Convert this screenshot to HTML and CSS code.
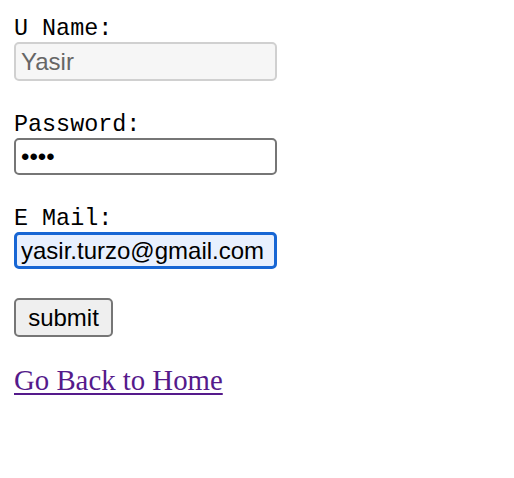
FILE: index.html
```html
<!DOCTYPE html>
<html>
<head>
<meta charset="utf-8">
<link rel="stylesheet" href="styles.css">
</head>
<body>
<form class="form">
  <label class="label" for="uname">U Name:</label>
  <input class="field field-readonly" id="uname" type="text" value="Yasir" readonly>
  <label class="label label-gap" for="pass">Password:</label>
  <input class="field field-plain" id="pass" type="password" value="abcd">
  <label class="label label-gap" for="mail">E Mail:</label>
  <input class="field field-focus" id="mail" type="text" value="yasir.turzo@gmail.com">
  <button class="submit" type="button">submit</button>
</form>
<a class="home" href="#">Go Back to Home</a>
</body>
</html>
```
FILE: styles.css
```css
html, body {
  background: #ffffff;
}
body {
  margin: 16px 14px 0 14px;
}
.form {
  display: flex;
  flex-direction: column;
  align-items: flex-start;
}
.label {
  display: block;
  font-family: "Liberation Mono", monospace;
  font-size: 23.4px;
  line-height: 26px;
  color: #000;
}
.label-gap {
  margin-top: 31px;
}
.field {
  box-sizing: border-box;
  width: 263px;
  margin: 0;
  padding: 0 4px;
  font-family: "Liberation Sans", Arial, sans-serif;
  font-size: 24px;
  border-radius: 5px;
  outline: none;
}
.field-readonly {
  height: 39px;
  border: 2px solid #d0d0d0;
  background: #f6f6f6;
  color: #666666;
  padding-left: 5px;
}
.field-plain {
  height: 37px;
  border: 2px solid #767676;
  background: #ffffff;
  color: #000;
  padding-left: 5px;
}
.field-focus {
  height: 37px;
  border: 3px solid #1766d4;
  background: #e8f0fe;
  color: #000;
  padding-left: 4px;
}
.submit {
  box-sizing: border-box;
  margin-top: 29px;
  height: 39px;
  width: 99px;
  padding: 0;
  font-family: "Liberation Sans", Arial, sans-serif;
  font-size: 24px;
  color: #000;
  background: #efefef;
  border: 2px solid #767676;
  border-radius: 5px;
}
.home {
  display: inline-block;
  margin-top: 27px;
  font-family: "Liberation Serif", "Times New Roman", serif;
  font-size: 28.8px;
  color: #551a8b;
  text-decoration: underline;
  text-decoration-thickness: 2px;
  text-underline-offset: 3px;
}
```
